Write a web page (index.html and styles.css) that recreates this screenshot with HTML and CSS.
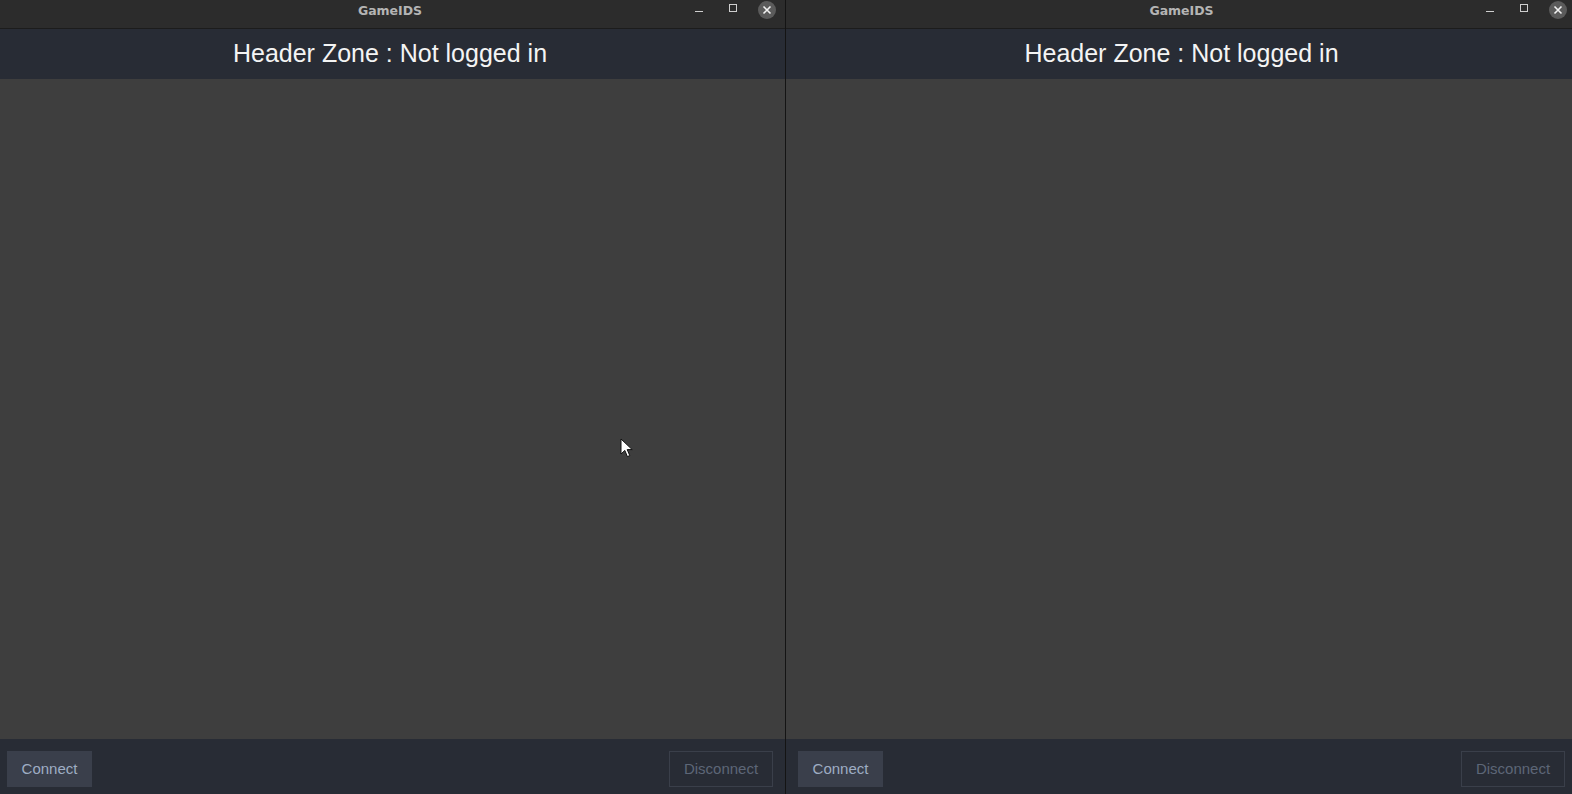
FILE: index.html
```html
<!DOCTYPE html>
<html>
<head>
<meta charset="utf-8">
<title>GameIDS</title>
<link rel="stylesheet" href="styles.css">
</head>
<body>
<div class="desktop">
  <div class="window win-left">
    <div class="titlebar">
      <div class="tb-spacer"></div>
      <div class="tb-title">GameIDS</div>
      <div class="tb-controls">
        <span class="ctl ctl-min"><svg width="10" height="10" viewBox="0 0 10 10"><rect x="1" y="6" width="8" height="1" fill="#cfcfcf"/></svg></span>
        <span class="ctl ctl-max"><svg width="10" height="10" viewBox="0 0 10 10"><rect x="1.5" y="0.5" width="7" height="7" fill="none" stroke="#cfcfcf" stroke-width="1"/></svg></span>
        <span class="ctl ctl-close"><svg width="18" height="18" viewBox="0 0 18 18"><circle cx="9" cy="9" r="9" fill="#5b5b5b"/><path d="M5.5 5.5 L12.5 12.5 M12.5 5.5 L5.5 12.5" stroke="#f2f2f2" stroke-width="1.6"/></svg></span>
      </div>
    </div>
    <div class="header"><span>Header Zone : Not logged in</span></div>
    <div class="content"></div>
    <div class="footer">
      <button class="btn btn-connect">Connect</button>
      <button class="btn btn-disconnect">Disconnect</button>
    </div>
  </div>
  <div class="divider"></div>
  <div class="window win-right">
    <div class="titlebar">
      <div class="tb-spacer"></div>
      <div class="tb-title">GameIDS</div>
      <div class="tb-controls">
        <span class="ctl ctl-min"><svg width="10" height="10" viewBox="0 0 10 10"><rect x="1" y="6" width="8" height="1" fill="#cfcfcf"/></svg></span>
        <span class="ctl ctl-max"><svg width="10" height="10" viewBox="0 0 10 10"><rect x="1.5" y="0.5" width="7" height="7" fill="none" stroke="#cfcfcf" stroke-width="1"/></svg></span>
        <span class="ctl ctl-close"><svg width="18" height="18" viewBox="0 0 18 18"><circle cx="9" cy="9" r="9" fill="#5b5b5b"/><path d="M5.5 5.5 L12.5 12.5 M12.5 5.5 L5.5 12.5" stroke="#f2f2f2" stroke-width="1.6"/></svg></span>
      </div>
    </div>
    <div class="header"><span>Header Zone : Not logged in</span></div>
    <div class="content"></div>
    <div class="footer">
      <button class="btn btn-connect">Connect</button>
      <button class="btn btn-disconnect">Disconnect</button>
    </div>
  </div>
  <svg class="cursor" width="15" height="21" viewBox="0 0 15 21">
    <path d="M1 1 L1 16 L4.8 12.4 L7.4 18.6 L9.8 17.6 L7.2 11.6 L12.2 11.6 Z" fill="#ffffff" stroke="#111111" stroke-width="1" stroke-linejoin="round"/>
  </svg>
</div>
</body>
</html>
```

FILE: styles.css
```css
html, body {
  margin: 0;
  padding: 0;
  width: 1572px;
  height: 794px;
  overflow: hidden;
  background: #3e3e3e;
}

.desktop {
  position: relative;
  display: flex;
  width: 1572px;
  height: 794px;
}

.window {
  display: flex;
  flex-direction: column;
  height: 794px;
}

.win-left {
  width: 785px;
}

.win-right {
  width: 786px;
}

.divider {
  width: 1px;
  height: 794px;
  background: #141414;
}

.titlebar {
  height: 28px;
  border-bottom: 1px solid #1c1c1c;
  background: #2c2c2c;
  display: grid;
  grid-template-columns: 1fr auto 1fr;
  align-items: center;
  box-sizing: content-box;
}

.win-left .titlebar,
.win-left .header {
  padding-right: 5px;
}

.win-right .titlebar,
.win-right .header {
  padding-left: 5px;
}

.win-right .tb-controls {
  padding-right: 5px;
}

.tb-title {
  font-family: "DejaVu Sans", "Liberation Sans", sans-serif;
  font-weight: bold;
  font-size: 12.5px;
  color: #b4b4b4;
  line-height: 22px;
  margin-top: -6px;
}

.tb-controls {
  display: flex;
  justify-content: flex-end;
  align-items: center;
  padding-right: 4px;
  margin-top: -8px;
}

.ctl {
  display: flex;
  align-items: center;
  justify-content: center;
}

.ctl-min {
  width: 10px;
  height: 10px;
  margin-right: 24px;
}

.ctl-max {
  width: 10px;
  height: 10px;
  margin-right: 20px;
  margin-top: -2px;
}

.ctl-close {
  width: 18px;
  height: 18px;
}

.header {
  height: 50px;
  background: #282c35;
  display: flex;
  align-items: center;
  justify-content: center;
}

.header span {
  font-family: "Liberation Sans", Arial, sans-serif;
  font-size: 25px;
  color: #f4f4f4;
  margin-top: -2px;
}

.content {
  flex: 1;
  background: #3e3e3e;
}

.footer {
  height: 55px;
  background: #282c35;
  display: flex;
  justify-content: space-between;
  align-items: flex-start;
  padding-top: 12px;
  box-sizing: border-box;
}

.win-left .footer {
  padding-left: 7px;
  padding-right: 12px;
}

.win-right .footer {
  padding-left: 12px;
  padding-right: 7px;
}

.btn {
  height: 36px;
  margin: 0;
  font-family: "Liberation Sans", Arial, sans-serif;
  font-size: 15px;
  border-radius: 0;
  box-sizing: border-box;
  padding-top: 0;
  padding-bottom: 1px;
}

.btn-connect {
  width: 85px;
  background: #3a3f4b;
  border: none;
  color: #9eadc3;
}

.btn-disconnect {
  width: 104px;
  background: transparent;
  border: 1px solid #3a3f4a;
  color: #5d6677;
}

.cursor {
  position: absolute;
  left: 620px;
  top: 438px;
}
```
